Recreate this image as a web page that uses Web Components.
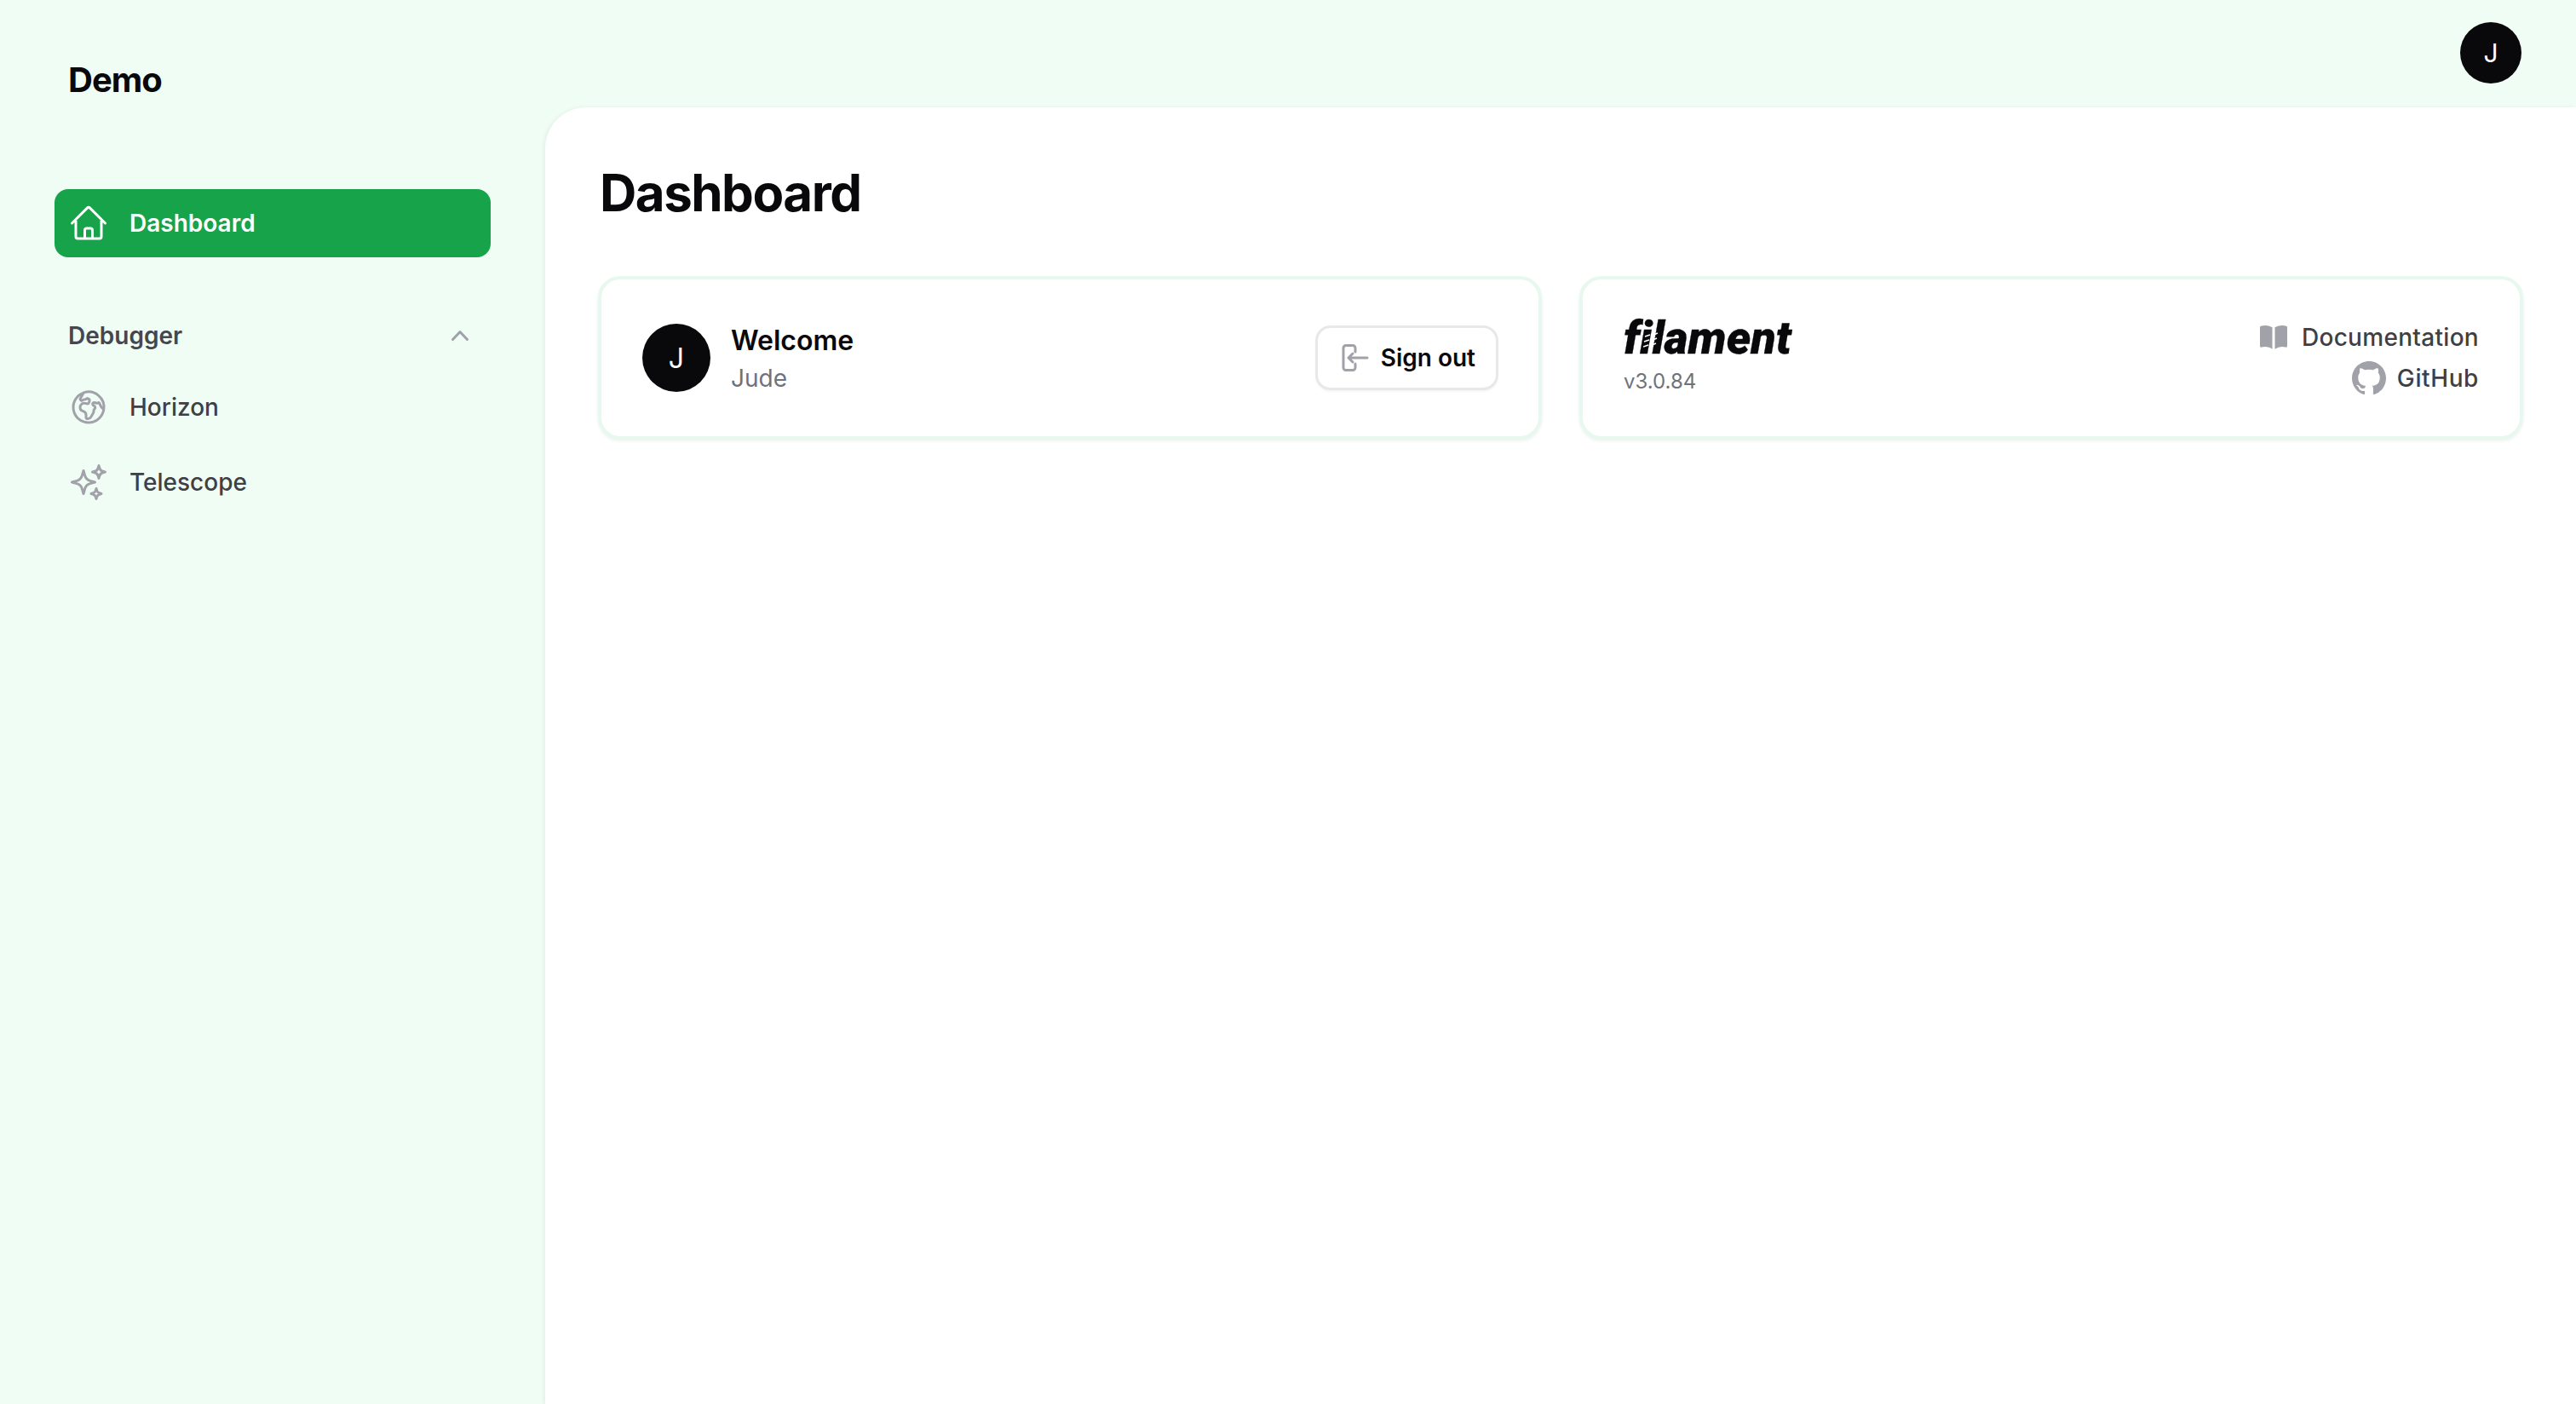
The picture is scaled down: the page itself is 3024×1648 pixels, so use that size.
<!DOCTYPE html>
<html>
<head>
    <meta charset="UTF-8">
    <title>Dashboard - Demo</title>
    <style>
        html, body { margin: 0; height: 100%; }
        body { background: #f0fdf4; font-family: Inter, "Liberation Sans", sans-serif; overflow: hidden; }
    </style>
</head>
<body>
    <app-shell>
        <side-bar slot="side" brand="Demo">
            <nav-item active icon="home">Dashboard</nav-item>
            <nav-group label="Debugger">
                <nav-item icon="globe">Horizon</nav-item>
                <nav-item icon="sparkles">Telescope</nav-item>
            </nav-group>
        </side-bar>
        <top-bar slot="top"><user-avatar size="72" font="30"></user-avatar></top-bar>
        <page-main title="Dashboard">
            <account-card></account-card>
            <filament-card></filament-card>
        </page-main>
    </app-shell>

    <script>
        const ICONS = {
            home: '<svg viewBox="0 0 24 24" fill="none" stroke="currentColor" stroke-width="1.5" stroke-linecap="round" stroke-linejoin="round"><path d="M2.25 12l8.954-8.955c.44-.439 1.152-.439 1.591 0L21.75 12M4.5 9.75v10.125c0 .621.504 1.125 1.125 1.125H9.75v-4.875c0-.621.504-1.125 1.125-1.125h2.25c.621 0 1.125.504 1.125 1.125V21h4.125c.621 0 1.125-.504 1.125-1.125V9.75M8.25 21h8.25"/></svg>',
            globe: '<svg viewBox="0 0 24 24" fill="none" stroke="currentColor" stroke-width="1.5" stroke-linecap="round" stroke-linejoin="round"><path d="M20.893 13.393l-1.135-1.135a2.252 2.252 0 01-.421-.585l-1.08-2.16a.414.414 0 00-.663-.107.827.827 0 01-.812.21l-1.273-.363a.89.89 0 00-.738 1.595l.587.39c.59.395.674 1.23.172 1.732l-.2.2c-.212.212-.33.498-.33.796v.41c0 .409-.11.809-.32 1.158l-1.315 2.191a2.11 2.11 0 01-1.81 1.025 1.055 1.055 0 01-1.055-1.055v-1.172c0-.92-.56-1.747-1.414-2.089l-.655-.261a2.25 2.25 0 01-1.383-2.46l.007-.042a2.25 2.25 0 01.29-.787l.09-.15a2.25 2.25 0 012.37-1.048l1.178.236a1.125 1.125 0 001.302-.795l.208-.73a1.125 1.125 0 00-.578-1.315l-.665-.332-.091.091a2.25 2.25 0 01-1.591.659h-.18c-.249 0-.487.1-.662.274a.931.931 0 01-1.458-1.137l1.411-2.353a2.25 2.25 0 00.286-.76m11.928 9.869A9 9 0 008.965 3.525m11.928 9.868A9 9 0 118.965 3.525"/></svg>',
            sparkles: '<svg viewBox="0 0 24 24" fill="none" stroke="currentColor" stroke-width="1.5" stroke-linecap="round" stroke-linejoin="round"><path d="M9.813 15.904L9 18.75l-.813-2.846a4.5 4.5 0 00-3.09-3.09L2.25 12l2.846-.813a4.5 4.5 0 003.09-3.09L9 5.25l.813 2.846a4.5 4.5 0 003.09 3.09L15.75 12l-2.846.813a4.5 4.5 0 00-3.09 3.09zM18.259 8.715L18 9.75l-.259-1.035a3.375 3.375 0 00-2.455-2.456L14.25 6l1.036-.259a3.375 3.375 0 002.455-2.456L18 2.25l.259 1.035a3.375 3.375 0 002.456 2.456L21.75 6l-1.035.259a3.375 3.375 0 00-2.456 2.456zM16.894 20.567L16.5 21.75l-.394-1.183a2.25 2.25 0 00-1.423-1.423L13.5 18.75l1.183-.394a2.25 2.25 0 001.423-1.423l.394-1.183.394 1.183a2.25 2.25 0 001.423 1.423l1.183.394-1.183.394a2.25 2.25 0 00-1.423 1.423z"/></svg>',
            chevron: '<svg viewBox="0 0 20 20" fill="currentColor"><path fill-rule="evenodd" clip-rule="evenodd" d="M14.77 12.79a.75.75 0 01-1.06-.02L10 8.832 6.29 12.77a.75.75 0 11-1.08-1.04l4.25-4.5a.75.75 0 011.08 0l4.25 4.5a.75.75 0 01-.02 1.06z"/></svg>',
            signout: '<svg viewBox="0 0 20 20" fill="none" stroke="currentColor" stroke-width="1.5" stroke-linecap="round" stroke-linejoin="round"><path d="M11 6.5V4.25a1.5 1.5 0 0 0-1.5-1.5h-4a1.5 1.5 0 0 0-1.5 1.5v11.5a1.5 1.5 0 0 0 1.5 1.5h4a1.5 1.5 0 0 0 1.5-1.5V13.5"/><path d="M18 10H7M9.5 7.5L7 10l2.5 2.5"/></svg>',
            book: '<svg viewBox="0 0 20 20" fill="currentColor"><path d="M10.75 16.82A7.462 7.462 0 0115 15.5c.71 0 1.396.098 2.046.282A.75.75 0 0018 15.06v-11a.75.75 0 00-.546-.721A9.006 9.006 0 0015 3a8.963 8.963 0 00-4.25 1.065V16.82zM9.25 4.065A8.963 8.963 0 005 3c-.85 0-1.673.118-2.454.339A.75.75 0 002 4.06v11a.75.75 0 00.954.721A7.506 7.506 0 015 15.5c1.579 0 3.042.487 4.25 1.32V4.065z"/></svg>',
            github: '<svg viewBox="2 2 20 20" fill="currentColor"><path fill-rule="evenodd" clip-rule="evenodd" d="M12 2C6.477 2 2 6.484 2 12.017c0 4.425 2.865 8.18 6.839 9.504.5.092.682-.217.682-.483 0-.237-.008-.868-.013-1.703-2.782.605-3.369-1.343-3.369-1.343-.454-1.158-1.11-1.466-1.11-1.466-.908-.62.069-.608.069-.608 1.003.07 1.531 1.032 1.531 1.032.892 1.53 2.341 1.088 2.91.832.092-.647.35-1.088.636-1.338-2.22-.253-4.555-1.113-4.555-4.951 0-1.093.39-1.988 1.029-2.688-.103-.253-.446-1.272.098-2.65 0 0 .84-.27 2.75 1.026A9.564 9.564 0 0112 6.844c.85.004 1.705.115 2.504.337 1.909-1.296 2.747-1.027 2.747-1.027.546 1.379.202 2.398.1 2.651.64.7 1.028 1.595 1.028 2.688 0 3.848-2.339 4.695-4.566 4.943.359.309.678.92.678 1.855 0 1.338-.012 2.419-.012 2.747 0 .268.18.58.688.482A10.019 10.019 0 0022 12.017C22 6.484 17.522 2 12 2z"/></svg>'
        };

        class Base extends HTMLElement {
            constructor() {
                super();
                this.attachShadow({ mode: 'open' });
            }
            connectedCallback() {
                this.shadowRoot.innerHTML = this.view();
            }
        }

        customElements.define('app-shell', class extends Base {
            view() {
                return `
                <style>
                    :host { display: grid; grid-template-columns: 640px 1fr; grid-template-rows: 126px 1fr; height: 1648px; }
                    .side { grid-row: 1 / 3; display: block; }
                    .main { min-width: 0; background: #fff; border-top-left-radius: 48px; box-shadow: -2px 0 4px rgba(0,0,0,.05); }
                </style>
                <div class="side"><slot name="side"></slot></div>
                <slot name="top"></slot>
                <div class="main"><slot></slot></div>`;
            }
        });

        customElements.define('top-bar', class extends Base {
            view() {
                return `
                <style>
                    :host { display: flex; justify-content: flex-end; padding: 26px 64px 0 0; box-sizing: border-box; height: 126px; }
                </style>
                <slot></slot>`;
            }
        });

        customElements.define('user-avatar', class extends Base {
            view() {
                const s = this.getAttribute('size');
                const f = this.getAttribute('font');
                return `
                <style>
                    :host { display: flex; flex: none; width: ${s}px; height: ${s}px; border-radius: 50%; background: #09090b; color: #fff;
                        align-items: center; justify-content: center; font-size: ${f}px; font-weight: 400; }
                </style>
                J`;
            }
        });

        customElements.define('side-bar', class extends Base {
            view() {
                return `
                <style>
                    :host { display: block; }
                    .brand { height: 190px; padding: 70px 0 0 80px; box-sizing: border-box; font-size: 40px; line-height: 48px; font-weight: 700; letter-spacing: -1px; color: #09090b; }
                    nav { display: flex; flex-direction: column; gap: 68px; padding: 32px 64px 0; }
                </style>
                <div class="brand">${this.getAttribute('brand')}</div>
                <nav><slot></slot></nav>`;
            }
        });

        customElements.define('nav-item', class extends Base {
            view() {
                const active = this.hasAttribute('active');
                return `
                <style>
                    :host { display: flex; align-items: center; gap: 24px; height: 80px; padding: 0 16px; border-radius: 16px;
                        font-size: 28px; line-height: 40px; font-weight: 500; color: #3f3f46; }
                    :host([active]) { background: #16a34a; color: #fff; font-weight: 600; }
                    .ic { width: 48px; height: 48px; flex: none; color: ${active ? '#fff' : '#a1a1aa'}; }
                    svg { display: block; width: 100%; height: 100%; }
                </style>
                <span class="ic">${ICONS[this.getAttribute('icon')]}</span>
                <slot></slot>`;
            }
        });

        customElements.define('nav-group', class extends Base {
            view() {
                return `
                <style>
                    :host { display: flex; flex-direction: column; gap: 8px; }
                    .head { display: flex; align-items: center; justify-content: space-between; height: 48px; padding: 0 16px; margin-bottom: 12px;
                        font-size: 28px; font-weight: 600; color: #46464e; }
                    .ic { width: 40px; height: 40px; color: #a1a1aa; }
                    svg { display: block; width: 100%; height: 100%; }
                </style>
                <div class="head"><span>${this.getAttribute('label')}</span><span class="ic">${ICONS.chevron}</span></div>
                <slot></slot>`;
            }
        });

        customElements.define('page-main', class extends Base {
            view() {
                return `
                <style>
                    :host { display: block; padding: 64px 62px 0; }
                    h1 { margin: 0 0 62px 2px; font-size: 60px; line-height: 72px; font-weight: 700; letter-spacing: -1.5px; color: #09090b; }
                    .grid { display: grid; grid-template-columns: 1fr 1fr; gap: 44px; }
                </style>
                <h1>${this.getAttribute('title')}</h1>
                <div class="grid"><slot></slot></div>`;
            }
        });

        const cardCss = `
            :host { display: flex; align-items: center; justify-content: space-between; height: 192px; box-sizing: border-box; padding: 0 48px;
                background: #fff; border: 4px solid #e7f9ee; border-radius: 26px; box-shadow: 0 2px 4px rgba(0,0,0,.06); }
            svg { display: block; width: 100%; height: 100%; }
        `;

        customElements.define('account-card', class extends Base {
            view() {
                return `
                <style>
                    ${cardCss}
                    .who { display: flex; align-items: center; gap: 24px; }
                    .name { font-size: 32px; line-height: 44px; font-weight: 600; color: #09090b; }
                    .sub { font-size: 28px; line-height: 40px; margin-top: 2px; color: #71717a; }
                    .txt { position: relative; top: 1px; }
                </style>
                <div class="who">
                    <user-avatar size="80" font="32"></user-avatar>
                    <div class="txt"><div class="name">Welcome</div><div class="sub">Jude</div></div>
                </div>
                <sign-out>Sign out</sign-out>`;
            }
        });

        customElements.define('sign-out', class extends Base {
            view() {
                return `
                <style>
                    :host { display: flex; align-items: center; gap: 12px; height: 76px; box-sizing: border-box; padding: 0 24px 0 22px; margin-right: -1px; border: 3px solid #e8e8ea; border-radius: 18px;
                        font-size: 28px; font-weight: 600; color: #09090b; background: #fff; box-shadow: 0 2px 2px rgba(0,0,0,.04); }
                    .ic { width: 40px; height: 40px; color: #a1a1aa; }
                    svg { display: block; width: 100%; height: 100%; }
                </style>
                <span class="ic">${ICONS.signout}</span><slot></slot>`;
            }
        });

        customElements.define('filament-card', class extends Base {
            view() {
                return `
                <style>
                    ${cardCss}
                    .left { display: flex; flex-direction: column; margin-bottom: 4px; }
                    .logo { position: relative; font-family: Roboto, "Liberation Sans", sans-serif; font-size: 54px; line-height: 50px; font-weight: 900; font-style: italic; font-variant-ligatures: none; -webkit-text-stroke: .3px #09090b; color: #09090b; }
                    .coil { position: absolute; left: 23px; top: 16px; width: 18px; height: 26px; }
                    .ver { font-size: 24px; line-height: 32px; margin-top: 10px; color: #71717a; }
                    .links { display: flex; flex-direction: column; align-items: flex-end; gap: 8px; font-size: 28px; font-weight: 500; letter-spacing: .3px; color: #3f3f46; }
                    .links a { display: flex; align-items: center; gap: 13px; height: 40px; }
                    .links a.gh { letter-spacing: .6px; }
                    .ic { width: 40px; height: 40px; color: #a1a1aa; }
                </style>
                <div class="left">
                    <div class="logo">filament<svg class="coil" viewBox="0 0 18 26" fill="none" stroke="#fff" stroke-width="1.6"><path d="M2 7l6-2M12 5l5-2M1 13l6-2M11 11l5-2M0 19l6-2M10 17l5-2"/></svg></div>
                    <div class="ver">v3.0.84</div>
                </div>
                <div class="links">
                    <a><span class="ic">${ICONS.book}</span>Documentation</a>
                    <a class="gh"><span class="ic">${ICONS.github}</span>GitHub</a>
                </div>`;
            }
        });
    </script>
</body>
</html>
